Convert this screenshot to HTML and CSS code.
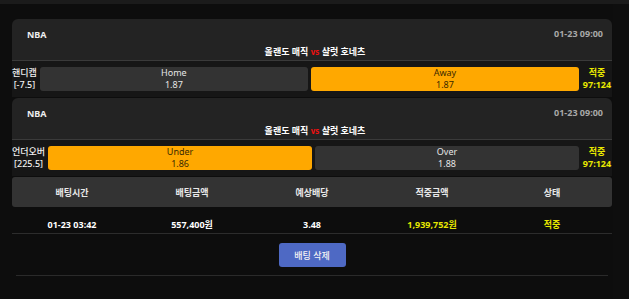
FILE: index.html
```html
<!DOCTYPE html>
<html lang="ko">
  <head>
    <meta charset="UTF-8" />
    <meta name="viewport" content="width=device-width, initial-scale=1.0" />
    <title>배팅 내역</title>
    <link rel="stylesheet" href="styles.css">
  </head>
  <body>
    <div class="topbar"></div>
    <div class="page">
      <div class="history">
        <div class="game">
          <div class="game-head">
            <div class="game-meta">
              <span class="league">NBA</span>
              <span class="time">01-23 09:00</span>
            </div>
            <div class="teams">올랜도 매직 <span class="vs">vs</span> 샬럿 호네츠</div>
          </div>
          <div class="pick-row">
            <div class="pick-type">핸디캡<br />[-7.5]</div>
            <div class="pick">Home<br />1.87</div>
            <div class="pick selected">Away<br />1.87</div>
            <div class="pick-result">적중<br />97:124</div>
          </div>
        </div>

        <div class="game">
          <div class="game-head">
            <div class="game-meta">
              <span class="league">NBA</span>
              <span class="time">01-23 09:00</span>
            </div>
            <div class="teams">올랜도 매직 <span class="vs">vs</span> 샬럿 호네츠</div>
          </div>
          <div class="pick-row">
            <div class="pick-type">언더오버<br />[225.5]</div>
            <div class="pick selected">Under<br />1.86</div>
            <div class="pick">Over<br />1.88</div>
            <div class="pick-result">적중<br />97:124</div>
          </div>
        </div>

        <div class="summary">
          <div class="summary-head">
            <div>배팅시간</div>
            <div>배팅금액</div>
            <div>예상배당</div>
            <div>적중금액</div>
            <div>상태</div>
          </div>
          <div class="summary-row">
            <div>01-23 03:42</div>
            <div>557,400원</div>
            <div>3.48</div>
            <div class="win">1,939,752원</div>
            <div class="win">적중</div>
          </div>
        </div>

        <div class="actions">
          <button id="deleteBtn">배팅 삭제</button>
        </div>
      </div>
    </div>
  </body>
</html>
```

FILE: styles.css
```css
* {
  margin: 0;
  padding: 0;
  box-sizing: border-box;
}

body {
  background-color: #0e0e0e;
  color: #fff;
  font-family: "Noto Sans", "Noto Sans CJK KR", sans-serif;
  font-size: 9px;
  height: 299px;
  overflow: hidden;
}

.topbar {
  height: 4px;
  background-color: #1b1b1b;
}

.page {
  display: flex;
  height: 295px;
}

.history {
  width: 613px;
  padding: 15px 1px 0 12px;
  background-color: #0d0d0d;
}

.game {
  margin-bottom: 1px;
}

.game-head {
  background-color: #232323;
  border-radius: 6px 6px 0 0;
  border-bottom: 1px solid #3a3a3a;
  padding: 7px 9px 5px 15px;
  height: 42px;
}

.game-meta {
  display: flex;
  justify-content: space-between;
  align-items: center;
  line-height: 14px;
}

.league {
  font-weight: 700;
  color: #eee;
  padding-top: 2px;
}

.time {
  font-weight: 700;
  color: #a8a8a8;
}

.teams {
  text-align: center;
  font-weight: 700;
  line-height: 14px;
  margin-top: 3px;
}

.vs {
  color: #f01010;
  font-size: 8px;
}

.pick-row {
  display: flex;
  align-items: center;
  gap: 3px;
  height: 36px;
  background-color: #161616;
}

.pick-type {
  text-align: center;
  line-height: 12px;
  font-weight: 500;
  color: #f0f0f0;
}

.pick {
  flex: 1;
  height: 24px;
  background-color: #333;
  border-radius: 3px;
  text-align: center;
  line-height: 12px;
  color: #e6e6e6;
}

.pick.selected {
  background-color: #ffa800;
  color: #3a2a00;
}

.pick-result {
  width: 30px;
  text-align: center;
  line-height: 12px;
  font-weight: 700;
  color: #e8e800;
}

.summary-head,
.summary-row {
  display: grid;
  grid-template-columns: repeat(5, 1fr);
  text-align: center;
  font-weight: 700;
}

.summary-head {
  background-color: #333;
  border-radius: 3px;
  height: 30px;
  align-items: center;
  color: #e8e8e8;
}

.summary-row {
  align-items: center;
  border-bottom: 1px solid #2c2c2c;
  padding-top: 8px;
  height: 27px;
}

.win {
  color: #e8e800;
}

.actions {
  display: flex;
  justify-content: center;
  padding: 9px 0 8px;
  margin: 0 4px;
  border-bottom: 1px solid #2a2a2a;
}

#deleteBtn {
  background-color: #4e69c4;
  color: #f4f4f4;
  border: none;
  border-radius: 3px;
  width: 67px;
  height: 24px;
  font-family: inherit;
  font-size: 9px;
  font-weight: 500;
}
```
